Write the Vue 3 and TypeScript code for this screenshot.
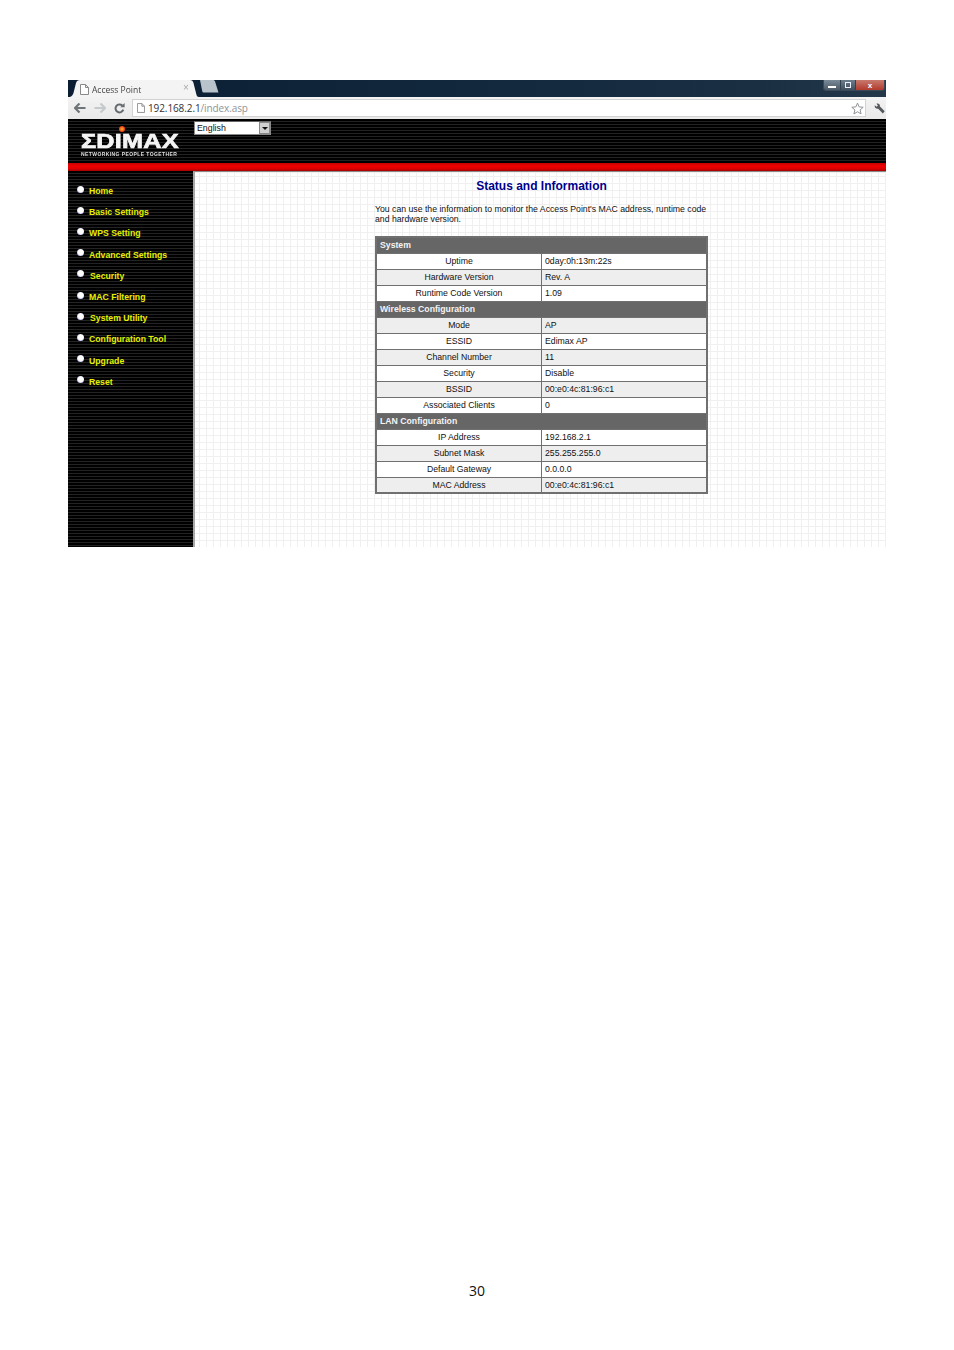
<script setup lang="ts">
interface Row { label: string; value?: string; head?: boolean; alt?: boolean }
const navItems = [
  { label: 'Home', shift: false },
  { label: 'Basic Settings', shift: false },
  { label: 'WPS Setting', shift: false },
  { label: 'Advanced Settings', shift: false },
  { label: 'Security', shift: true },
  { label: 'MAC Filtering', shift: false },
  { label: 'System Utility', shift: true },
  { label: 'Configuration Tool', shift: false },
  { label: 'Upgrade', shift: false },
  { label: 'Reset', shift: false },
]
const rows: Row[] = [
  { label: 'System', head: true },
  { label: 'Uptime', value: '0day:0h:13m:22s' },
  { label: 'Hardware Version', value: 'Rev. A', alt: true },
  { label: 'Runtime Code Version', value: '1.09' },
  { label: 'Wireless Configuration', head: true },
  { label: 'Mode', value: 'AP', alt: true },
  { label: 'ESSID', value: 'Edimax AP' },
  { label: 'Channel Number', value: '11', alt: true },
  { label: 'Security', value: 'Disable' },
  { label: 'BSSID', value: '00:e0:4c:81:96:c1', alt: true },
  { label: 'Associated Clients', value: '0' },
  { label: 'LAN Configuration', head: true },
  { label: 'IP Address', value: '192.168.2.1' },
  { label: 'Subnet Mask', value: '255.255.255.0', alt: true },
  { label: 'Default Gateway', value: '0.0.0.0' },
  { label: 'MAC Address', value: '00:e0:4c:81:96:c1', alt: true },
]
</script>

<template>
  <div class="page">
    <div class="shot">
      <div class="tabbar">
        <div class="tab">
          <svg class="tab-shape" width="131" height="17" viewBox="0 0 131 17">
            <path d="M0 17 C4 17 5 15 6 11 L8 3 C8.500 1 10 0 12 0 L122 0 C124 0 125 1 125.500 3 L128 13 C128.600 15.500 129 17 131 17 Z" fill="#f4f4f4" />
          </svg>
          <svg class="page-ico" width="9" height="11" viewBox="0 0 9 11">
            <path d="M.5.500H5.500L8.500 3.500V10.500H.5ZM5.500.500V3.500H8.500" fill="#fff" stroke="#8a8a8a" stroke-width="1" />
          </svg>
          <span class="tab-title">Access Point</span>
          <span class="tab-close">×</span>
        </div>
        <svg class="newtab" width="20" height="13" viewBox="0 0 20 13">
          <path d="M1 0H14C15 0 15.500 .5 16 1.500L19.500 12.500H5C4 12.500 3.500 12 3.200 11Z" fill="#b9c3cc" />
        </svg>
        <div class="winctl">
          <span class="wbtn wmin"><i></i></span>
          <span class="wbtn wmax"><i></i></span>
          <span class="wbtn wclose">x</span>
        </div>
      </div>

      <div class="toolbar">
        <svg class="tool" width="12" height="10" viewBox="0 0 12 10"><path d="M5.500 0.500L1 5L5.500 9.500M1.500 5H11.500" fill="none" stroke="#6f7478" stroke-width="2.200" /></svg>
        <svg class="tool" width="12" height="10" viewBox="0 0 12 10"><path d="M6.500 0.500L11 5L6.500 9.500M10.500 5H.5" fill="none" stroke="#c6c9cb" stroke-width="2.200" /></svg>
        <svg class="tool" width="11" height="11" viewBox="0 0 11 11"><path d="M9.300 6.700A4 4 0 1 1 8.300 2.500" fill="none" stroke="#666b70" stroke-width="2" /><path d="M6.300 4.300H10.600V0Z" fill="#666b70" /></svg>
        <div class="omnibox">
          <svg class="page-ico2" width="8" height="10" viewBox="0 0 9 11">
            <path d="M.5.500H5.500L8.500 3.500V10.500H.5ZM5.500.500V3.500H8.500" fill="#fff" stroke="#8a8a8a" stroke-width="1" />
          </svg>
          <span class="url"><span class="host">192.168.2.1</span><span class="path">/index.asp</span></span>
          <svg class="star" width="13" height="13" viewBox="0 0 24 24"><path d="M12 2L15 9L22.500 9.700L16.800 14.600L18.600 22L12 18L5.400 22L7.200 14.600L1.500 9.700L9 9Z" fill="#fff" stroke="#8d9093" stroke-width="1.800" /></svg>
        </div>
        <svg class="wrench" width="11" height="11" viewBox="0 0 11 11"><path d="M.8 2.200L2.600 3.700L3.900 2.600L2.500 .7C4 -.1 5.700 .7 5.900 2.400C5.900 2.900 5.900 3.200 6 3.500L10.700 8.300L8.800 10.400L4.200 5.700C2.200 6.200 .2 4.700 .8 2.200Z" fill="#55595c" /></svg>
      </div>

      <div class="site-head stripes">
        <div class="logo">
          <span class="logo-dot"></span>
          <span class="logo-word">ΣDIMAX</span>
          <span class="logo-tag">NETWORKING PEOPLE TOGETHER</span>
        </div>
        <div class="lang">
          <span class="lang-text">English</span>
          <span class="lang-btn"><i></i></span>
        </div>
      </div>
      <div class="redband"></div>

      <div class="body">
        <nav class="side stripes">
          <a v-for="item in navItems" :key="item.label" class="nav-item">
            <span class="bullet"></span>
            <span class="nav-label" :class="{ shift: item.shift }">{{ item.label }}</span>
          </a>
        </nav>
        <main class="main">
          <div class="content">
            <h1 class="title">Status and Information</h1>
            <p class="intro">You can use the information to monitor the Access Point's MAC address, runtime code and hardware version.</p>
            <table class="info">
              <tbody>
                <tr v-for="r in rows" :key="r.label + (r.value ?? '')" :class="{ alt: r.alt }">
                  <th v-if="r.head" colspan="2">{{ r.label }}</th>
                  <template v-else>
                    <td class="k">{{ r.label }}</td>
                    <td class="v">{{ r.value }}</td>
                  </template>
                </tr>
              </tbody>
            </table>
          </div>
        </main>
      </div>
    </div>
    <div class="pageno">30</div>
  </div>
</template>

<style>
html, body { margin: 0; background: #fff; }
</style>

<style scoped>
.page {
  width: 954px;
  height: 1350px;
  display: flex;
  flex-direction: column;
  background: #fff;
  overflow: hidden;
  font-family: "Liberation Sans", Arial, sans-serif;
}
.shot {
  width: 818px;
  height: 467px;
  margin: 80px 0 0 68px;
  display: flex;
  flex-direction: column;
  filter: blur(0.3px);
}
.pageno {
  margin-top: auto;
  margin-bottom: 50px;
  text-align: center;
  font: 14px/18px "Open Sans", sans-serif;
  color: #111;
}
.tabbar {
  height: 17px;
  flex: none;
  display: flex;
  align-items: flex-start;
  background: linear-gradient(90deg, #0b1e33 0%, #12283d 50%, #1a2f42 85%, #24384a 100%);
  position: relative;
}
.tab {
  width: 131px;
  height: 17px;
  position: relative;
  display: flex;
  align-items: center;
  flex: none;
  padding-left: 12px;
  box-sizing: border-box;
  padding-top: 1px;
}
.tab-shape { position: absolute; left: 0; top: 0; }
.page-ico { position: relative; margin-right: 3px; }
.tab-title { position: relative; font: 8.5px "Open Sans", sans-serif; color: #444; }
.tab-close { position: absolute; left: 115px; top: 2px; font: 10px "Liberation Sans", sans-serif; color: #aaa; }
.newtab { margin-left: 0; flex: none; }
.winctl {
  margin-left: auto;
  margin-right: 1px;
  display: flex;
  height: 10px;
  border: 1px solid #3c4a57;
  border-top: none;
  border-radius: 0 0 3px 3px;
  overflow: hidden;
}
.wbtn { display: flex; align-items: center; justify-content: center; height: 100%; box-sizing: border-box; }
.wmin { width: 16px; background: linear-gradient(#7b8a98, #4a5a68); }
.wmin i { width: 8px; height: 2px; background: #fff; margin-top: 4px; }
.wmax { width: 15px; background: linear-gradient(#6c7d8b, #3e505f); border-left: 1px solid #33414d; }
.wmax i { width: 6px; height: 6px; border: 1px solid #eef; box-sizing: border-box; }
.wclose { width: 29px; background: linear-gradient(#c77a6e, #b23a2c); color: #fff; font: bold 8px/9px "Liberation Sans", sans-serif; border-left: 1px solid #33414d; }

.toolbar {
  height: 22px;
  flex: none;
  display: flex;
  align-items: center;
  background: linear-gradient(#f3f3f3, #e9e9e9);
  box-sizing: border-box;
  padding-left: 6px;
}
.tool { flex: none; margin-right: 8px; }
.tool:nth-child(3) { margin-right: 7px; }
.omnibox {
  flex: none;
  width: 734px;
  height: 18px;
  margin-left: 0;
  background: #fff;
  border: 1px solid #d2d2d2;
  box-sizing: border-box;
  display: flex;
  align-items: center;
  padding-left: 4px;
}
.page-ico2 { flex: none; margin-right: 3px; }
.url { font: 10px "Open Sans", sans-serif; letter-spacing: -0.1px; }
.host { color: #333; }
.path { color: #8e9498; }
.star { margin-left: auto; margin-right: 1px; }
.wrench { margin-left: 8px; flex: none; }

.stripes {
  background: repeating-linear-gradient(180deg, #000 0, #000 2px, #232323 2px, #232323 3px);
}
.site-head {
  height: 44px;
  flex: none;
  display: flex;
  align-items: flex-start;
  padding-left: 13px;
  box-sizing: border-box;
}
.logo {
  width: 113px;
  height: 44px;
  position: relative;
  display: flex;
  flex-direction: column;
  flex: none;
  padding-top: 12px;
  box-sizing: border-box;
}
.logo-dot {
  position: absolute;
  left: 38px;
  top: 7px;
  width: 6px;
  height: 6px;
  border-radius: 50%;
  background: radial-gradient(circle at 50% 50%, #ffb040 0, #f04a10 60%, #a82000 100%);
}
.logo-word {
  font: bold 20px/20px "Liberation Sans", sans-serif;
  color: #f4f4f4;
  -webkit-text-stroke: 0.7px #f4f4f4;
  transform: scaleX(1.26);
  transform-origin: left center;
  white-space: nowrap;
  height: 20px;
  letter-spacing: 0.2px;
}
.logo-tag {
  font: bold 5px/6px "Liberation Sans", sans-serif;
  color: #ddd;
  letter-spacing: 0.42px;
  white-space: nowrap;
  margin-top: 0;
}
.lang {
  width: 77px;
  height: 14px;
  margin-top: 2px;
  background: #fff;
  border: 1px solid #8a8a8a;
  border-top-color: #666;
  box-sizing: border-box;
  display: flex;
  align-items: center;
  padding-left: 2px;
  flex: none;
}
.lang-text { font: 8.8px "Liberation Sans", sans-serif; color: #111; }
.lang-btn {
  margin-left: auto;
  width: 11px;
  height: 12px;
  background: #d0d0d0;
  border: 1px solid #888;
  box-sizing: border-box;
  display: flex;
  align-items: center;
  justify-content: center;
}
.lang-btn i {
  width: 0;
  height: 0;
  border: 3px solid transparent;
  border-top: 3px solid #111;
  border-bottom: 0;
}
.redband {
  height: 8px;
  flex: none;
  background: linear-gradient(#c80000, #f00000 40%, #e00000 70%, #a80000);
}
.body {
  flex: 1;
  min-height: 0;
  display: flex;
}
.side {
  width: 125px;
  flex: none;
  box-sizing: border-box;
  padding-top: 9px;
  display: flex;
  flex-direction: column;
}
.nav-item {
  height: 21.2px;
  display: flex;
  align-items: center;
  padding-left: 9px;
  flex: none;
}
.bullet {
  width: 7px;
  height: 7px;
  border-radius: 50%;
  background: radial-gradient(circle at 55% 45%, #fff 0, #fff 45%, #b8b8ee 75%, #5050a0 100%);
  margin-right: 5px;
  margin-top: -3px;
  flex: none;
}
.nav-label {
  font: bold 8.700px "Liberation Sans", sans-serif;
  color: #e8f000;
  white-space: nowrap;
  margin-top: 1px;
}
.nav-label.shift { margin-left: 1px; }
.main {
  flex: 1;
  min-width: 0;
  border-left: 2px solid #a8a8a8;
  border-top: 1px solid #8a8a8a;
  padding-left: 180px;
  box-sizing: border-box;
  background-color: #fff;
  background-image:
    repeating-linear-gradient(90deg, #f0f0f0 0, #f0f0f0 1.5px, transparent 1.5px, transparent 7px),
    repeating-linear-gradient(180deg, #f0f0f0 0, #f0f0f0 1.5px, transparent 1.5px, transparent 7px);
  background-position: 4px 4px;
}
.content { width: 333px; }
.title {
  margin: 7px 0 0;
  font: bold 12px/14px "Liberation Sans", sans-serif;
  color: #00008b;
  text-align: center;
}
.intro {
  margin: 11px 0 0;
  font: 8.7px/10px "Liberation Sans", sans-serif;
  color: #111;
}
.info {
  margin-top: 12px;
  width: 333px;
  height: 258px;
  border-collapse: collapse;
  table-layout: fixed;
  border: 2px solid #707070;
  font: 8.700px "Liberation Sans", sans-serif;
  color: #111;
}
.info tr { height: 16px; background: #fff; }
.info tr.alt { background: #eeeeee; }
.info th {
  background: #666;
  color: #f4f4f4;
  font: bold 8.700px "Liberation Sans", sans-serif;
  text-align: left;
  padding: 0 0 0 3px;
  border: 1px solid #707070;
}
.info td {
  padding: 0;
  border: 1px solid #707070;
  border-width: 1.5px 1px;
}
.info .k { width: 132px; text-align: center; }
.info .v { padding-left: 3px; }
</style>
